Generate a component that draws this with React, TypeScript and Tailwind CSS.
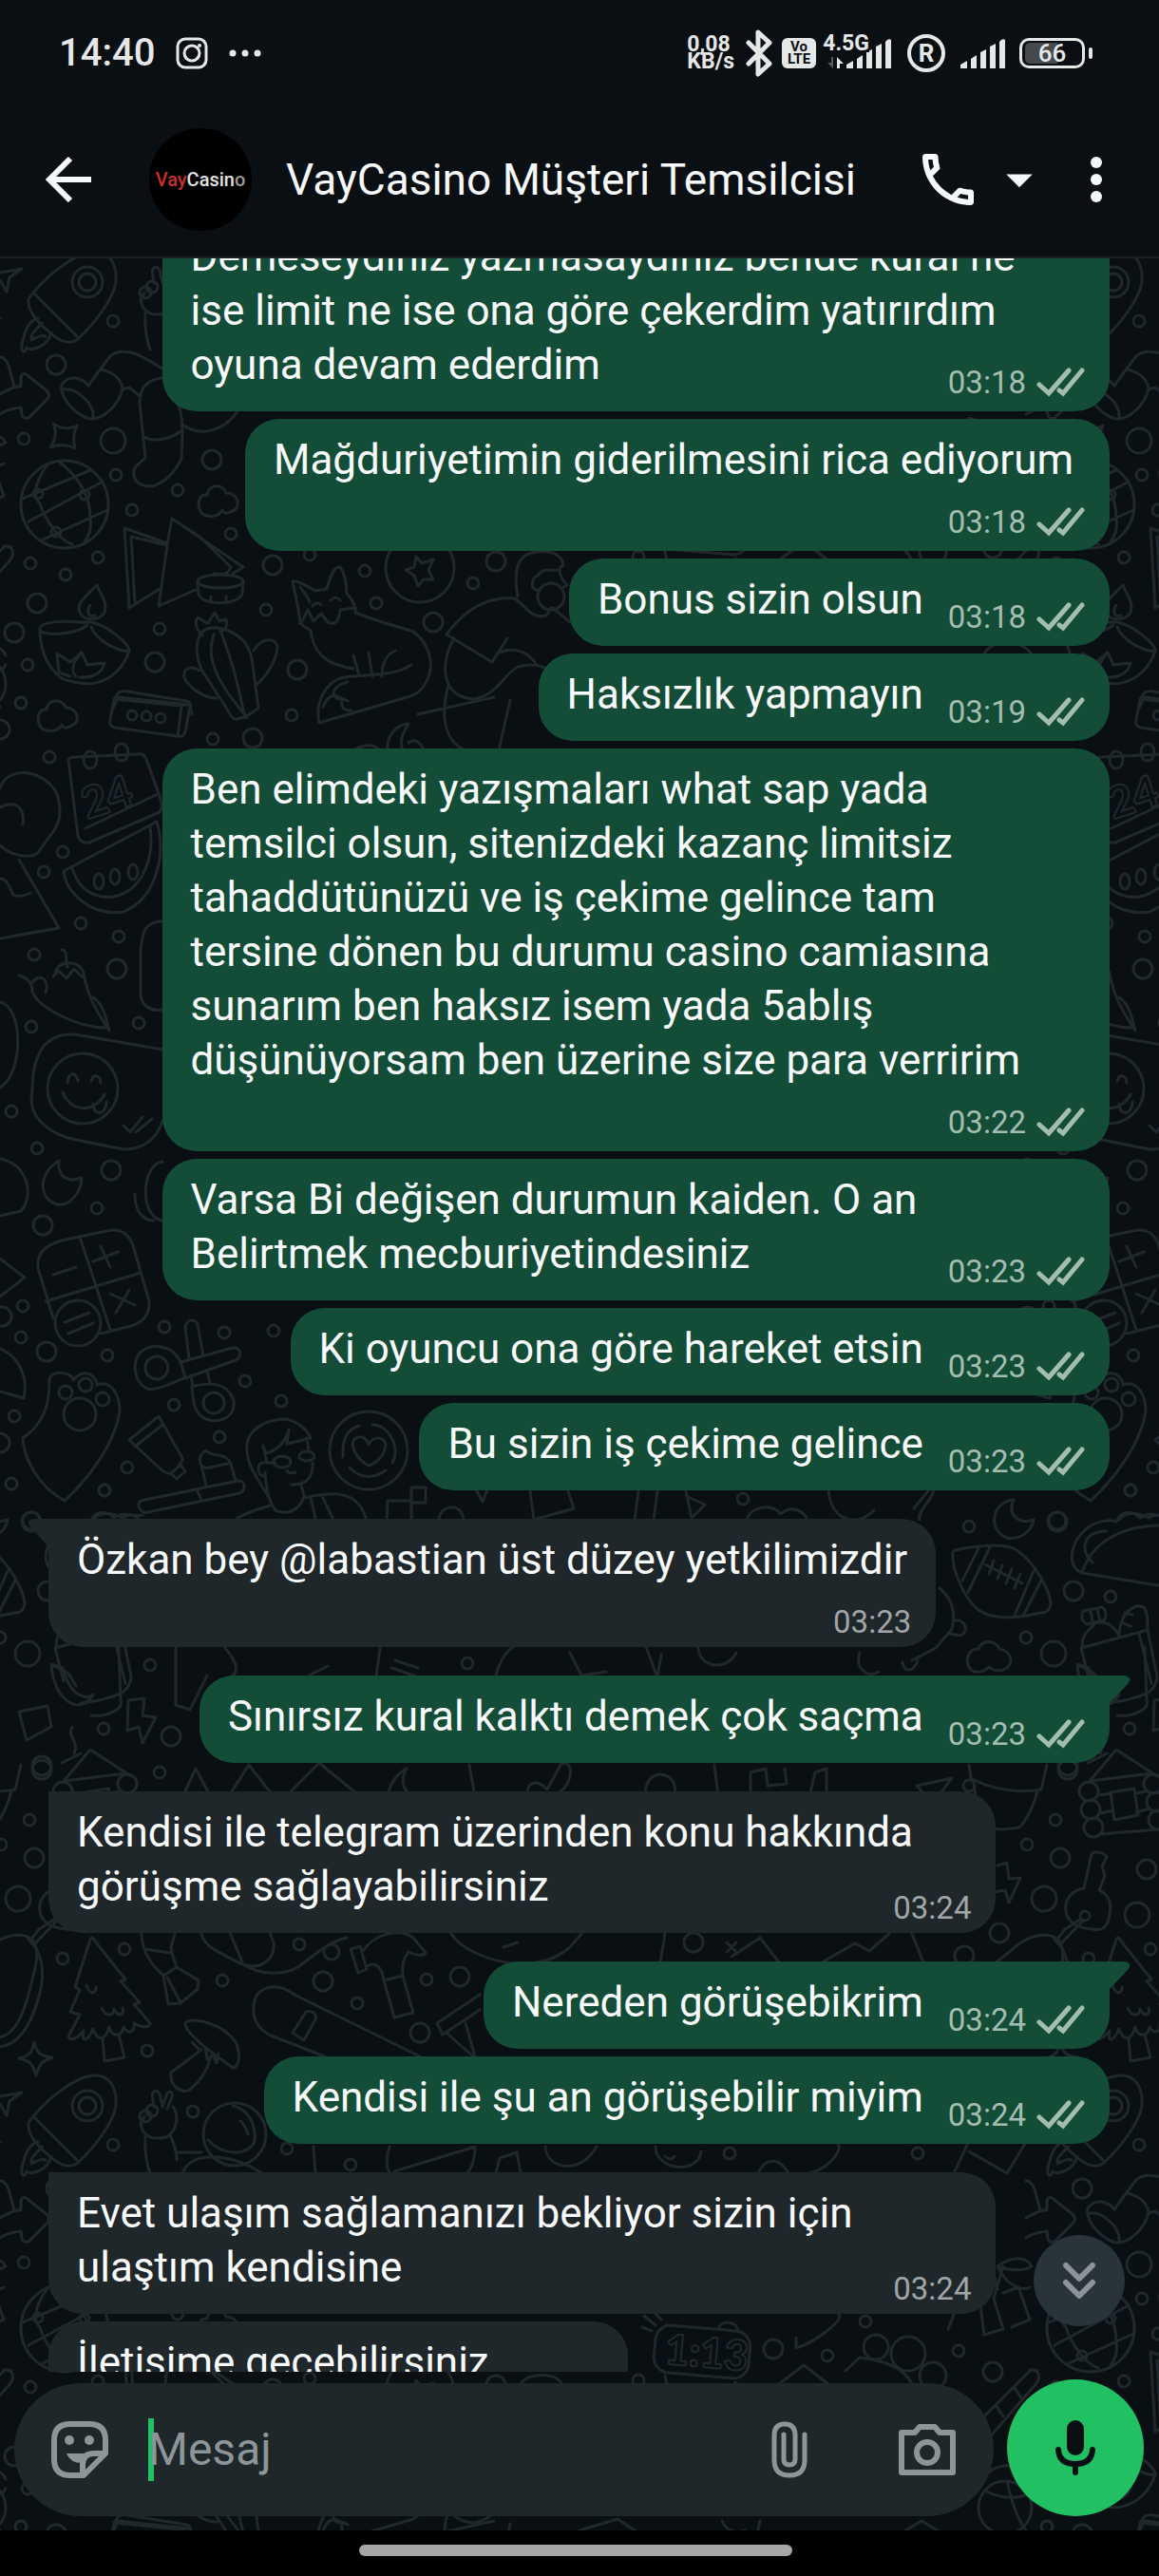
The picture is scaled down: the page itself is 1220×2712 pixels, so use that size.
import { MdArrowDropDown, MdOutlineCall } from 'react-icons/md'

type Message = {
  text: string
  time: string
  out?: boolean
  // first bubble after the sender changes
  first?: boolean
  // where the time sits: beside the text, over the last line, or on a row of its own
  layout?: 'inline' | 'wide' | 'below' | 'wideBelow' | 'halfBelow'
}

const messages: Message[] = [
  {
    text: 'Demeseydiniz yazmasaydınız bende kural ne\nise limit ne ise ona göre çekerdim yatırırdım\noyuna devam ederdim',
    time: '03:18',
    out: true,
    layout: 'wide',
  },
  { text: 'Mağduriyetimin giderilmesini rica ediyorum', time: '03:18', out: true, layout: 'below' },
  { text: 'Bonus sizin olsun', time: '03:18', out: true },
  { text: 'Haksızlık yapmayın', time: '03:19', out: true },
  {
    text: 'Ben elimdeki yazışmaları what sap yada\ntemsilci olsun, sitenizdeki kazanç limitsiz\ntahaddütünüzü ve iş çekime gelince tam\ntersine dönen bu durumu casino camiasına\nsunarım ben haksız isem yada 5ablış\ndüşünüyorsam ben üzerine size para verririm',
    time: '03:22',
    out: true,
    layout: 'wideBelow',
  },
  {
    text: 'Varsa Bi değişen durumun kaiden. O an\nBelirtmek mecburiyetindesiniz',
    time: '03:23',
    out: true,
    layout: 'wide',
  },
  { text: 'Ki oyuncu ona göre hareket etsin', time: '03:23', out: true },
  { text: 'Bu sizin iş çekime gelince', time: '03:23', out: true },
  { text: 'Özkan bey @labastian üst düzey yetkilimizdir', time: '03:23', first: true, layout: 'below' },
  { text: 'Sınırsız kural kalktı demek çok saçma', time: '03:23', out: true, first: true },
  {
    text: 'Kendisi ile telegram üzerinden konu hakkında\ngörüşme sağlayabilirsiniz',
    time: '03:24',
    first: true,
    layout: 'wide',
  },
  { text: 'Nereden görüşebikrim', time: '03:24', out: true, first: true },
  { text: 'Kendisi ile şu an görüşebilir miyim', time: '03:24', out: true },
  {
    text: 'Evet ulaşım sağlamanızı bekliyor sizin için\nulaştım kendisine',
    time: '03:24',
    first: true,
    layout: 'wide',
  },
  { text: 'İletişime geçebilirsiniz', time: '03:24', layout: 'halfBelow' },
]

const dots: [number, number, number][] = [
  [119, 338, 6], [25, 462, 6], [122, 500, 6], [139, 537, 6], [187, 516, 6], [103, 587, 6], [32, 593, 6],
  [69, 605, 6], [243, 562, 6], [280, 642, 6], [168, 662, 6], [29, 700, 6], [22, 740, 6], [326, 584, 6],
  [384, 601, 6], [396, 635, 6], [307, 753, 6], [224, 778, 6], [498, 614, 6], [59, 384, 10], [39, 635, 10],
  [15, 666, 10], [163, 697, 10], [223, 484, 10], [287, 595, 10], [456, 655, 10], [313, 705, 10],
  [266, 777, 10], [522, 591, 10], [119, 464, 13], [0, 768, 10], [52, 797, 6], [66, 897, 6], [46, 918, 6],
  [85, 972, 6], [36, 1005, 6], [125, 986, 6], [123, 1020, 10], [33, 1081, 6], [146, 1077, 6], [12, 1170, 6],
  [39, 1209, 6], [117, 1232, 10], [102, 1272, 6], [45, 1290, 10], [24, 1375, 6], [22, 1408, 6],
  [49, 1423, 10], [113, 1427, 6], [173, 1397, 6], [236, 1403, 6], [288, 1401, 6], [258, 1454, 6],
  [183, 1479, 6], [296, 1475, 6], [231, 1513, 6], [134, 1545, 6], [110, 1569, 6], [15, 1491, 6],
  [12, 1562, 6], [0, 1519, 10], [2, 1386, 10], [33, 1601, 9], [1020, 1607, 6], [1113, 1602, 10],
  [1190, 1569, 6], [1130, 1675, 10], [1169, 1681, 6], [1080, 1724, 6], [1109, 1741, 13], [158, 1753, 6],
  [492, 1751, 6], [180, 1828, 10], [168, 1866, 6], [44, 1859, 10], [1189, 1820, 6], [1124, 1863, 10],
  [1111, 1916, 6], [1081, 1942, 6], [1116, 1956, 10], [1207, 1968, 10], [1099, 1999, 13], [1197, 2016, 13],
  [1052, 2035, 10], [1015, 2059, 10], [66, 2062, 6], [131, 2052, 6], [234, 2085, 6], [155, 2159, 6],
  [315, 2047, 6], [340, 2086, 10], [376, 2109, 6], [449, 2084, 6], [484, 2081, 10], [442, 2140, 10],
  [203, 303, 6], [302, 342, 6], [369, 359, 6], [768, 347, 6], [966, 347, 6], [911, 524, 6], [814, 553, 10],
  [922, 551, 13], [956, 558, 18], [982, 581, 14], [1009, 555, 6], [1045, 577, 10], [871, 560, 6],
  [672, 586, 6], [1102, 740, 6], [782, 1578, 6], [1020, 1880, 6], [730, 2045, 10],
]

const doodles = [
  // star, rocket, flame
  'M0 287L23 283L10 292L7 307L0 295',
  'M35 308C50 290 80 265 100 265C122 266 125 290 120 305C112 325 95 345 83 356C76 363 66 360 60 356C45 345 28 330 30 315ZM35 308L83 356',
  'M40 335C28 338 26 352 23 362C22 372 26 372 28 366C34 370 50 365 54 350M44 340C38 348 32 350 33 358C38 356 42 352 48 354',
  // astronaut waving
  'M152 308L148 315C150 330 160 333 175 330C188 322 188 305 182 298M162 298L160 285C162 280 166 280 168 285L171 298L176 284C180 280 182 283 181 288L176 300',
  'M153 330C152 350 155 360 158 368M179 328C185 340 186 350 186 354M186 346L212 346M192 368C200 345 240 345 276 368M219 333C235 350 260 350 268 335C270 315 260 300 245 297M253 313C258 318 260 322 261 327',
  // arrow, mitten, sock
  'M0 415C8 410 18 406 22 407L22 397C24 392 28 393 30 396L50 412C52 416 52 418 50 420L31 439C28 442 23 440 23 436L22 429C14 430 6 432 0 436M0 376C10 375 12 400 15 406',
  'M65 405C72 394 86 397 93 406L112 380C120 368 130 370 138 371C152 375 165 385 171 388M65 405C62 418 80 438 95 441C110 442 125 425 129 410C128 400 120 392 107 389M67 410C80 408 100 425 98 440',
  'M129 410L136 408L146 416M185 398C155 395 147 408 147 425L153 482L142 492C138 505 145 512 160 512C175 508 185 495 191 483L192 455C192 435 188 425 184 420M151 460C162 466 180 462 190 454M192 447C210 460 235 455 250 433',
  'M56 446C64 452 74 452 81 448C77 456 77 465 79 472C72 468 60 468 53 471C59 462 60 454 56 446Z',
  // globe
  'M50 489C35 510 35 525 42 530C48 550 65 570 76 573M62 486C80 500 95 520 95 545C97 560 92 566 88 572M24 525L95 495M30 549L108 507M43 569L113 537',
  // clouds
  'M212 540C206 530 210 520 218 521C220 508 236 510 238 519C252 519 254 536 244 538C238 542 236 540 234 537C230 545 218 545 212 540Z',
  'M43 766C37 756 41 746 49 747C51 734 67 736 69 745C83 745 85 762 75 764C69 768 67 766 65 763C61 771 49 771 43 766Z',
  'M1022 1758C1014 1748 1020 1735 1030 1736C1034 1724 1050 1728 1052 1736C1066 1738 1068 1754 1056 1758C1050 1760 1044 1758 1041 1755C1036 1760 1028 1762 1022 1758Z',
  // tents and bowl
  'M131 556L176 572L181 546L256 597L245 604M131 556L136 640L168 620M138 565L176 574L167 638L208 620M138 565L142 634M181 546L210 565L243 597C240 605 235 605 225 604',
  'M208 614L209 625C212 638 250 638 255 625L256 612M222 634L222 628M238 634L238 628',
  // lamp
  'M42 662C42 655 65 653 82 655L97 655C110 658 135 675 136 685C130 705 115 715 104 718C95 722 65 718 60 710C50 700 42 685 42 662ZM42 664C50 670 80 668 92 658M96 660C100 672 120 685 136 686',
  'M102 616C90 628 80 635 84 645C88 654 104 654 110 645C114 635 106 626 102 616ZM95 637C90 645 94 650 100 648M60 688L62 708L74 712M60 688L74 697L86 687L92 700L110 698C108 708 98 714 84 713M86 687C74 700 76 708 80 712',
  // remote
  'M120 736L124 730C126 728 132 727 134 728L196 738C200 739 201 741 200 744L195 770C194 775 190 776 187 775L120 766C116 764 115 762 116 758ZM120 736L190 743L199 741M191 744L187 775',
  // cactus
  'M209 672C212 660 228 658 240 664C255 670 264 680 266 700L272 745C265 752 258 755 250 757C246 758 243 755 240 748L212 705C206 690 206 680 209 672ZM225 668C217 690 225 715 260 755M232 664C246 700 250 720 258 756',
  'M210 706C200 700 192 704 194 714C200 725 215 735 228 735M267 685C275 672 288 670 292 680C292 695 280 712 271 720M213 669C204 660 206 652 208 650L216 655L219 656L226 645L231 654L238 652C240 660 236 664 234 664',
  // fox
  'M316 656C315 640 308 615 308 612C312 610 325 618 332 622L344 620C348 605 352 596 358 597C364 605 365 620 365 625C372 632 375 640 374 645C400 655 420 660 435 665C450 675 455 695 453 705C450 722 440 730 432 733L336 761C332 745 338 725 355 715C375 708 410 715 433 700',
  'M316 656C325 665 328 660 328 670C333 690 345 700 372 704M318 654L324 642L330 654L338 646L345 655C355 660 357 650 358 642L374 640M372 690L378 711M388 687L392 712M402 712C402 700 405 690 416 685M366 718C350 722 345 735 360 736C358 748 365 748 370 748M329 638C332 634 336 634 338 637M348 632C352 628 356 629 358 632M316 618C320 624 324 628 326 634',
  'M438 586L444 593L456 589L451 600L456 610L446 610L440 617L436 606L427 600L436 597Z',
  // person
  'M470 668C490 640 515 628 542 630C555 640 560 652 575 648L580 640M470 668L518 697L534 672M478 672C462 700 465 735 500 736C525 730 530 710 545 702C560 698 570 700 578 706M523 688C540 680 555 685 565 700M472 722C464 750 466 780 490 790M537 737L525 790M582 640L600 655',
  'M545 628C540 600 545 585 560 582C575 578 592 582 593 595C585 598 590 608 597 616L590 620M568 622C556 620 560 608 566 606C572 596 582 602 586 600',
  'M372 790C385 782 395 784 400 790M408 790C406 775 418 762 430 762C424 772 420 780 424 790M430 782C438 776 444 784 446 790',
  // calendar
  'M72 800L82 880C84 887 90 888 94 887L168 855C172 850 170 845 168 838L155 802C153 795 150 793 145 794L80 797C74 797 72 798 72 800ZM90 872L166 836',
  'M0 830C10 800 60 815 62 845C68 870 50 880 40 898C30 905 10 900 0 890M0 850C20 840 26 855 24 868',
  // watermelon
  'M67 917L165 865C175 900 165 945 130 960C95 965 70 940 67 917ZM76 914C85 945 115 952 138 936C155 922 162 895 158 870',
  'M20 905L62 977L0 988M0 925C8 925 10 935 14 942C20 945 28 942 32 940',
  // peppers
  'M65 1000C72 1000 68 1010 71 1018M58 1025C60 1010 85 1010 88 1025C92 1050 105 1070 115 1085C112 1075 110 1058 98 1050M20 1027C30 1030 34 1035 34 1044C40 1060 80 1082 112 1082M34 1034C45 1022 52 1035 48 1045M56 1028L62 1022L70 1030L78 1020L86 1028',
  'M171 970C150 970 150 985 148 1000L148 1045C148 1060 160 1065 171 1063M0 1055C25 1060 25 1130 0 1145',
  // winking card
  'M171 1105L85 1090C55 1085 40 1100 35 1130L33 1160C35 1180 55 1195 80 1200L130 1210C150 1210 165 1200 171 1180M71 1140C72 1128 80 1128 82 1138M96 1138C98 1130 106 1132 106 1140M66 1150C75 1172 100 1172 110 1152M98 1162C98 1175 112 1175 112 1160M130 1185L137 1192L150 1176M143 1192L160 1178',
  'M62 1222C40 1235 40 1262 60 1268C75 1270 85 1255 86 1240C72 1245 60 1240 62 1222Z',
  'M171 1223C150 1225 145 1280 171 1285M142 1257C142 1275 150 1285 162 1285M0 1220C30 1225 36 1260 22 1275L0 1280M0 1325L26 1345L0 1365',
  // calculator
  'M40 1335C38 1318 50 1310 65 1306L112 1296C128 1292 138 1300 142 1318L157 1370C158 1385 150 1392 138 1396L106 1404M40 1335L56 1388M84 1302L116 1400M48 1370L148 1340M56 1342L80 1334M98 1328L124 1318M106 1312L116 1334M116 1362L142 1374M136 1358L122 1382',
  'M68 1392L94 1382M72 1404L98 1393',
  'M0 1420C20 1428 30 1450 25 1472L0 1465',
  // paw
  'M52 1454C52 1440 77 1445 77 1453C90 1438 102 1450 102 1458C118 1452 126 1470 126 1485C122 1520 90 1560 68 1580C40 1565 25 1535 24 1514C45 1500 52 1480 52 1454Z',
  // scissors
  'M190 1434C182 1415 160 1415 150 1422C138 1430 140 1455 155 1462C165 1465 190 1452 195 1450ZM202 1460C220 1455 240 1455 246 1475C248 1495 225 1500 213 1492C203 1485 203 1470 202 1460ZM190 1434L245 1419C253 1418 256 1428 248 1432L195 1451M199 1430L195 1398C196 1388 206 1388 208 1395L214 1427M201 1448L203 1459M218 1444L221 1456',
  // toothpaste and brush
  'M136 1516L167 1491L192 1535C192 1540 188 1545 180 1551C175 1552 170 1548 165 1543ZM142 1523L171 1500M180 1551L186 1557L195 1549L189 1541',
  'M148 1580L250 1559C258 1558 260 1568 252 1572L156 1592C148 1594 143 1584 148 1580ZM208 1570L212 1579M217 1564L212 1543C218 1550 230 1540 243 1541L248 1559M212 1543C208 1535 212 1530 217 1527C222 1535 238 1528 243 1541',
  // man with glasses
  'M282 1575C270 1555 258 1540 260 1520C262 1505 280 1494 300 1494C315 1496 325 1508 327 1514L302 1520L304 1505C300 1520 290 1528 280 1530L277 1522L281 1540L290 1540M323 1514L325 1527M329 1540C330 1558 320 1563 307 1563M317 1563L320 1575C315 1592 300 1595 290 1590C282 1580 280 1565 279 1550M279 1540C270 1538 270 1552 277 1554M302 1548C304 1552 308 1551 311 1550M250 1598C265 1590 275 1588 284 1585M320 1577C345 1572 375 1565 385 1598M327 1577L332 1598M340 1577L350 1598',
  // heart plate
  'M361 1534C360 1515 365 1505 378 1501M392 1500C410 1500 422 1525 413 1540M368 1545C380 1558 395 1556 406 1548M388 1543C375 1536 368 1522 373 1515C380 1510 386 1514 388 1521C392 1512 403 1512 406 1520C406 1530 398 1540 388 1543Z',
  'M407 1600L408 1580L433 1580L433 1566L448 1566L448 1582L433 1582L433 1598M462 1600C462 1585 486 1580 488 1600M98 1600C108 1588 124 1596 130 1598C136 1592 144 1596 146 1600',
  'M502 1570L508 1581L513 1568M558 1570L562 1600L604 1588L598 1570M672 1570L668 1600M692 1570L688 1600M722 1570L728 1598L742 1584L724 1576M786 1600C790 1586 812 1582 822 1594C832 1584 846 1590 850 1600M872 1568C874 1600 900 1610 920 1590M968 1600C964 1590 990 1572 980 1566L962 1588',
  // moon, football, taco
  'M1067 1579C1045 1580 1038 1610 1060 1619C1075 1622 1087 1610 1088 1600C1072 1605 1060 1595 1067 1579Z',
  'M1005 1632C1030 1626 1060 1625 1070 1632C1090 1645 1105 1675 1106 1688C1105 1697 1100 1698 1095 1698C1070 1704 1045 1706 1030 1695C1012 1680 1003 1650 1003 1640C1002 1635 1003 1633 1005 1632ZM1030 1630L1013 1664M1042 1629L1019 1676M1088 1654L1067 1703M1096 1664L1077 1701M1037 1647L1076 1667M1046 1643L1041 1657M1055 1648L1050 1662M1065 1652L1059 1667M1074 1657L1068 1672',
  'M1139 1656C1122 1650 1125 1620 1150 1605C1160 1600 1170 1600 1175 1602C1180 1590 1192 1590 1200 1598C1210 1590 1218 1598 1230 1595M1139 1656L1230 1671M1139 1656C1148 1625 1180 1605 1225 1606C1240 1610 1250 1630 1230 1671M1150 1645C1136 1632 1140 1612 1165 1612',
  // bread bag
  'M1140 1735C1136 1720 1150 1715 1152 1709C1165 1705 1172 1712 1178 1722M1138 1735L1208 1716L1218 1765C1216 1785 1200 1785 1185 1790L1165 1793M1138 1735L1147 1770M1199 1720L1212 1772M1178 1722C1178 1700 1195 1685 1205 1693C1210 1705 1207 1712 1208 1716M1184 1698L1192 1700M1180 1708L1190 1712M1140 1696L1160 1692C1166 1696 1164 1704 1162 1706L1144 1710C1138 1706 1138 1700 1140 1696ZM1148 1695L1150 1708M1155 1694L1158 1707',
  'M989 1672C1004 1685 1006 1700 1002 1715L985 1735L960 1748M1004 1706C1018 1704 1020 1720 1010 1722L1000 1720M966 1748C962 1760 952 1762 950 1750M905 1740C900 1755 912 1768 925 1760',
  'M125 1734L127 1790C130 1800 112 1808 96 1806M54 1752C56 1790 84 1808 98 1784C90 1790 74 1786 66 1756ZM54 1752L72 1762L80 1775M185 1734L185 1795L200 1800L218 1764M236 1734C250 1750 255 1764 236 1768M345 1754L325 1764M400 1736L396 1764M416 1748L440 1756M412 1756L436 1764M540 1734C530 1740 524 1755 522 1764M600 1740L612 1764L638 1760M680 1734L692 1766L696 1742M735 1734C735 1756 765 1760 775 1740',
  'M135 1790L152 1788L150 1806L164 1808L150 1835L146 1818L134 1822ZM20 1802L50 1796L54 1818L28 1832ZM76 1818C70 1828 84 1834 78 1846',
  'M192 1892L206 1862L222 1892M240 1892L262 1858L282 1884L292 1892M300 1892L336 1856L380 1892M408 1892C410 1876 420 1866 428 1862C418 1880 430 1890 438 1892M500 1892L494 1858M556 1892C552 1876 566 1872 576 1884L590 1858C604 1850 604 1876 590 1886M680 1890C676 1860 716 1862 710 1890M752 1858L756 1892M790 1892L790 1866L806 1862L808 1880L828 1878L826 1862M852 1892L858 1866L870 1862L870 1892',
  // pot, cabin
  'M1020 1858L1022 1872C1045 1885 1075 1888 1096 1884L1102 1858M1025 1875L1030 1920C1045 1928 1060 1926 1073 1924C1082 1915 1088 1900 1092 1886M965 1880L1002 1872L990 1888L976 1892Z',
  'M1147 1875L1175 1842L1218 1870M1147 1875L1212 1867M1145 1856L1165 1846M1156 1890L1170 1888M1158 1909L1172 1906M1158 1931L1219 1926M1195 1888L1206 1886M1196 1908L1210 1904M1169 1887L1194 1883L1198 1911L1173 1916Z',
  'M1050 1964L1060 1961L1062 1978L1074 1977L1062 2003L1058 1990L1046 1992',
  // key
  'M1141 1988L1149 1952C1152 1948 1162 1950 1165 1955L1160 1965L1163 1975L1157 1990C1168 1995 1170 2005 1168 2015C1166 2030 1160 2033 1150 2031C1130 2030 1120 2020 1122 2005C1124 1995 1130 1990 1141 1988ZM1138 2020L1120 2032L1112 2043L1118 2045L1140 2022',
  // avocado and tree
  'M1048 2066C1065 2055 1075 2038 1100 2037C1120 2038 1122 2055 1115 2080C1108 2110 1100 2140 1080 2145M1110 2042C1130 2060 1125 2090 1120 2105C1110 2140 1095 2155 1076 2155',
  'M98 2041L132 2084L127 2086L147 2108L141 2110L158 2130C158 2135 150 2135 141 2130C142 2140 135 2142 130 2134C128 2145 118 2145 115 2134C110 2150 102 2148 98 2136C92 2150 85 2150 88 2138C78 2150 70 2148 73 2142L84 2121L74 2118L84 2095L79 2092L94 2045C95 2040 97 2039 98 2041ZM108 2145L110 2170L131 2166L125 2142M91 2090C95 2102 101 2098 101 2092M107 2114C112 2125 120 2122 120 2115C125 2125 132 2120 129 2114',
  'M36 2150C39 2162 42 2164 55 2166C44 2170 42 2172 38 2185C34 2172 32 2170 20 2167C32 2164 34 2160 36 2150Z',
  // brush, guitar, hammer
  'M149 2030C148 2050 155 2060 162 2070L172 2080L186 2071C182 2060 180 2055 180 2050L184 2036M172 2080L177 2110L190 2109L208 2094L209 2085L186 2071M152 2052L180 2056M176 2082L190 2108',
  'M212 2036C215 2050 230 2055 255 2068C275 2075 290 2062 288 2045L282 2030M240 2030L256 2068C275 2080 300 2080 315 2070C335 2055 345 2045 365 2040',
  'M369 2052L379 2049L386 2073L377 2077ZM382 2054C395 2035 420 2030 435 2040L448 2056C445 2060 435 2058 430 2055C422 2065 424 2072 424 2080L404 2085C402 2070 395 2065 386 2070M404 2085L415 2124L435 2119L424 2080',
  'M442 2165L310 2100C290 2085 270 2092 267 2110C265 2125 272 2137 285 2143L342 2165M308 2140L322 2118C328 2116 334 2120 332 2126L320 2148ZM460 2130L505 2100M466 2142L505 2116M460 2130L466 2142M470 2140L498 2165M490 2130L500 2165',
  'M475 2036C490 2060 560 2085 600 2050L612 2036M700 2036L695 2066M770 2060L800 2040L820 2066M865 2066L900 2046L915 2054L936 2036M960 2036L972 2066M530 2050L545 2045M765 2045L775 2055M775 2045L765 2055',
  // mushroom
  'M195 2130C200 2122 235 2130 248 2150C255 2165 250 2178 245 2177L215 2155C205 2145 195 2138 195 2130ZM212 2158L180 2182C178 2195 190 2205 200 2200C210 2192 218 2180 222 2165M202 2150L210 2158M216 2155L218 2168L224 2164L228 2172L230 2162',
  'M330 340L332 368M410 340C405 355 408 365 412 370M500 340C500 352 498 362 490 370M415 366L500 340M522 368L526 352L544 346L548 368M574 340C574 362 610 372 628 340M690 340C690 365 735 370 738 345M700 350C704 354 708 354 710 350M798 368C805 352 820 350 830 368M852 368C875 362 890 340 880 335M1005 366L1022 330M1020 345L1060 368L1080 335',
  // clock, banana, bamboo
  'M700 581L702 590L772 596L774 588M757 530C760 522 776 524 777 534M676 530L686 534M678 518L690 528M686 512L696 522',
  'M838 541L838 552C860 545 884 525 884 518L878 510M890 576L905 562C930 566 950 570 960 590M820 590L846 570L872 590',
  'M1020 440L1040 448L1050 490M1036 538L1056 532L1046 500L1056 466M1036 538L1030 492L1046 486M1065 530L1084 522L1072 488L1056 494M1050 466C1065 455 1080 455 1086 466C1076 472 1062 470 1050 466C1060 488 1078 492 1084 488M998 532L1006 512L1046 488',
  'M1035 625L1085 575C1092 574 1096 580 1092 588L1040 648M1048 612L1056 624M1068 594L1076 606M1036 688C1050 668 1080 676 1086 690M1060 692C1064 712 1070 730 1080 744M1036 702C1056 712 1080 712 1086 700',
  'M120 744L124 734L200 742L202 752M340 744C346 730 352 730 366 738M520 734L440 752M610 744L650 732L680 752M760 734C764 744 775 748 784 744M800 734L796 752M940 752L970 734L1000 752',
]

function Wallpaper() {
  return (
    <svg className="pointer-events-none absolute inset-0 h-full w-full" aria-hidden="true">
      <defs>
        <g id="tile" fill="none" stroke="#21282c" strokeWidth="3" strokeLinecap="round" strokeLinejoin="round">
          {doodles.map((d) => (
            <path key={d} d={d} />
          ))}
          {dots.map(([x, y, r]) => (
            <circle key={`${x}-${y}-${r}`} cx={x} cy={y} r={r} />
          ))}
          <circle cx="92" cy="297" r="16" />
          <circle cx="92" cy="297" r="9" />
          <circle cx="153" cy="308" r="6" />
          <circle cx="160" cy="302" r="6" />
          <circle cx="247" cy="327" r="33" />
          <circle cx="68" cy="531" r="46" />
          <circle cx="40" cy="520" r="5" />
          <circle cx="89" cy="521" r="5" />
          <circle cx="59" cy="560" r="5" />
          <ellipse cx="232" cy="612" rx="24" ry="7" />
          <circle cx="139" cy="753" r="5" />
          <circle cx="154" cy="754" r="5" />
          <circle cx="169" cy="756" r="5" />
          <circle cx="442" cy="598" r="36" />
          <circle cx="580" cy="628" r="14" />
          <ellipse cx="95" cy="800" rx="7" ry="9" />
          <ellipse cx="128" cy="792" rx="7" ry="9" />
          <ellipse cx="104" cy="928" rx="5" ry="8" />
          <ellipse cx="121" cy="923" rx="5" ry="8" />
          <ellipse cx="140" cy="918" rx="5" ry="8" />
          <circle cx="87" cy="1146" r="37" />
          <circle cx="82" cy="1393" r="24" />
          <circle cx="69" cy="1466" r="7" />
          <circle cx="90" cy="1458" r="7" />
          <circle cx="108" cy="1473" r="7" />
          <circle cx="84" cy="1489" r="17" />
          <circle cx="165" cy="1440" r="12" />
          <circle cx="225" cy="1477" r="11" />
          <ellipse cx="297" cy="1539" rx="9" ry="6" />
          <ellipse cx="323" cy="1533" rx="8" ry="5" />
          <circle cx="388" cy="1527" r="41" />
          <circle cx="1146" cy="1886" r="10" />
          <circle cx="1148" cy="1905" r="10" />
          <circle cx="1151" cy="1924" r="10" />
          <circle cx="1214" cy="1878" r="10" />
          <circle cx="1217" cy="1897" r="10" />
          <circle cx="1219" cy="1916" r="10" />
          <circle cx="1142" cy="2017" r="5" />
          <circle cx="349" cy="2055" r="8" />
          <circle cx="1058" cy="720" r="28" />
          <rect x="689" y="531" width="100" height="50" rx="16" transform="rotate(5 739 556)" />
          <g strokeWidth="2" fontFamily="Lato, sans-serif" fontWeight="900">
            <text x="86" y="856" fontSize="46" transform="rotate(-18 110 840)">
              24
            </text>
            <text x="700" y="572" fontSize="44" transform="rotate(5 739 556)">
              1:13
            </text>
          </g>
        </g>
      </defs>
      {/* the drawing repeats every 1080 x 1920 */}
      <g transform="translate(0 -272)">
        <use href="#tile" x="-1080" />
        <use href="#tile" />
        <use href="#tile" x="1080" />
        <use href="#tile" x="-1080" y="1920" />
        <use href="#tile" y="1920" />
        <use href="#tile" x="1080" y="1920" />
      </g>
    </svg>
  )
}

function SignalBars() {
  return (
    <svg width="48" height="31" viewBox="0 0 48 31" fill="currentColor" aria-hidden="true">
      <path d="M0 31V27L7 23V31Z" />
      <path d="M11 31V21L17 17V31Z" />
      <path d="M21 31V14L27 11V31Z" />
      <path d="M31 31V8L37 5V31Z" />
      <path d="M41 31V3Q44 -1 47 1V31Z" />
    </svg>
  )
}

function StatusBar() {
  return (
    <div className="flex h-10 items-center justify-between pr-[70px] pl-[62px] text-[#e6e7e7]">
      <div className="flex items-center gap-[22px]">
        <span className="text-[40px] leading-10 font-medium">14:40</span>
        <svg width="34" height="34" viewBox="0 0 34 34" fill="none" stroke="currentColor" strokeWidth="3" aria-hidden="true">
          <rect x="2" y="2" width="30" height="30" rx="8" />
          <circle cx="17" cy="17" r="8" />
          <circle cx="25" cy="9" r="2" fill="currentColor" stroke="none" />
        </svg>
        <svg width="34" height="8" viewBox="0 0 34 8" fill="currentColor" aria-hidden="true">
          <circle cx="4" cy="4" r="3.5" />
          <circle cx="17" cy="4" r="3.5" />
          <circle cx="30" cy="4" r="3.5" />
        </svg>
      </div>
      <div className="flex items-center">
        <div className="flex flex-col text-[23px] leading-[18px] font-bold">
          <span>0,08</span>
          <span>KB/s</span>
        </div>
        <svg className="ml-3" width="28" height="50" viewBox="0 0 28 50" fill="none" stroke="currentColor" strokeWidth="5" strokeLinejoin="round" strokeLinecap="round" aria-hidden="true">
          <path d="M3 14L25 36L13 47V3L25 14L3 36" />
        </svg>
        <div className="ml-2.5 flex h-8 w-9 flex-col items-center justify-center rounded-md bg-[#e6e7e7] text-[15px] leading-[13px] font-bold text-[#0a0f13]">
          <span>Vo</span>
          <span>LTE</span>
        </div>
        <div className="relative ml-8">
          <SignalBars />
          <span className="absolute -top-1 right-6 bg-[#0a0f13] text-[23px] leading-[18px] font-bold">4.5G</span>
          <svg className="absolute bottom-0 -left-5" width="18" height="12" viewBox="0 0 18 12" aria-hidden="true">
            <path d="M6 0V12L0 6H4V0Z" fill="#55595b" />
            <path d="M10 12V0L17 7H13V12Z" fill="currentColor" />
          </svg>
        </div>
        <div className="ml-4 flex h-10 w-10 items-center justify-center rounded-full border-4 border-current text-[26px] leading-6 font-bold">
          R
        </div>
        <div className="ml-4">
          <SignalBars />
        </div>
        <div className="ml-3.5 flex items-center gap-1">
          <div className="relative flex h-8 w-[69px] items-center justify-center rounded-[10px] border-[3px] border-current">
            <div className="absolute inset-y-[2px] left-[3px] w-[34px] rounded-l-[5px] bg-[#46494b]" />
            <span className="relative text-[26px] leading-6 font-medium">66</span>
          </div>
          <div className="h-3 w-1 rounded-full bg-current" />
        </div>
      </div>
    </div>
  )
}

function ChatHeader() {
  return (
    <header className="border-b-2 border-[#1a2024] bg-[#0a0f13] pt-9">
      <StatusBar />
      <div className="mt-8 flex h-[162px] items-center pr-[60px] pl-12 text-[#f7f8fa]">
        <button type="button" aria-label="Geri">
          <svg width="48" height="48" viewBox="0 0 48 48" fill="none" stroke="currentColor" strokeWidth="6" aria-hidden="true">
            <path d="M26 2L4 24L26 46M4 24H48" />
          </svg>
        </button>
        <div className="ml-[61px] flex h-[108px] w-[108px] shrink-0 items-center justify-center rounded-full bg-black text-[20px] leading-6 font-medium">
          <span className="text-[#c9302c]">Vay</span>
          <span className="text-[#e2e2e2]">Casin</span>
          <span className="text-[#9a9a9a]">o</span>
        </div>
        <h1 className="ml-9 flex-1 text-[46px] leading-[60px] whitespace-nowrap">VayCasino Müşteri Temsilcisi</h1>
        <button type="button" aria-label="Ara" className="flex items-center">
          <MdOutlineCall size={72} />
          <MdArrowDropDown size={66} className="ml-1.5" />
        </button>
        <button type="button" aria-label="Menü" className="ml-[42px]">
          <svg width="12" height="48" viewBox="0 0 12 48" fill="currentColor" aria-hidden="true">
            <circle cx="6" cy="6" r="6" />
            <circle cx="6" cy="24" r="6" />
            <circle cx="6" cy="42" r="6" />
          </svg>
        </button>
      </div>
    </header>
  )
}

function Tail({ out }: { out?: boolean }) {
  return out ? (
    <svg className="absolute top-0 left-full text-[#144d37]" width="22" height="30" viewBox="0 0 22 30" fill="currentColor" aria-hidden="true">
      <path d="M-1 0H16Q25 2 19 9L-1 30Z" />
    </svg>
  ) : (
    <svg className="absolute top-0 right-full text-[#1f272a]" width="22" height="30" viewBox="0 0 22 30" fill="currentColor" aria-hidden="true">
      <path d="M23 0H6Q-3 2 3 9L23 30Z" />
    </svg>
  )
}

function Stamp({ time, out }: { time: string; out?: boolean }) {
  return (
    <div className={`flex items-center gap-2.5 self-end justify-self-end ${out ? 'pb-3 text-[#a3bdb1]' : 'pb-2 text-[#a1a5a7]'}`}>
      <time className="text-[33px] leading-9">{time}</time>
      {out && (
        <svg width="52" height="32" viewBox="0 0 52 32" fill="none" stroke="currentColor" strokeWidth="5" strokeLinecap="round" aria-hidden="true">
          <path d="M4 18L14 27L35 3M25 24L29 27L49 3" />
        </svg>
      )}
    </div>
  )
}

const layouts = {
  inline: 'flex gap-[26px]',
  wide: 'grid w-[89.3%] *:[grid-area:1/1]',
  below: 'grid',
  wideBelow: 'grid w-[89.3%]',
  halfBelow: 'grid w-[54.6%]',
}

function Bubble({ text, time, out, first, layout = 'inline' }: Message) {
  const below = layout !== 'inline' && layout !== 'wide'
  const textPadding = below ? (out ? 'pr-3 pb-[19px]' : 'pr-1 pb-[19px]') : 'pb-5'
  return (
    <li
      className={`relative rounded-[36px] pr-[26px] pl-[30px] ${layouts[layout]} ${
        out ? 'self-end bg-[#144d37]' : 'self-start bg-[#1f272a]'
      } ${first ? 'mt-[22px]' : ''} ${first && out ? 'rounded-tr-none' : ''} ${first && !out ? 'rounded-tl-none' : ''}`}
    >
      {first && <Tail out={out} />}
      <p className={`pt-[15px] text-[44px] leading-[57px] whitespace-pre text-[#f7f9fa] ${textPadding}`}>{text}</p>
      <Stamp time={time} out={out} />
    </li>
  )
}

function Composer() {
  return (
    <form className="relative flex items-end gap-3.5 pt-2 pr-4 pb-[15px] pl-[15px]">
      <div className="flex h-[140px] flex-1 items-center rounded-full bg-[#1f272a] pr-10 pl-[39px] text-[#8d9598]">
        <button type="button" aria-label="Çıkartmalar">
          <svg width="60" height="60" viewBox="0 0 60 60" fill="none" stroke="currentColor" strokeWidth="6" aria-hidden="true">
            <path d="M20 3H40Q57 3 57 20V34L34 57H20Q3 57 3 40V20Q3 3 20 3Z" strokeLinejoin="round" />
            <path d="M33 57V46Q33 34 45 34H57" />
            <circle cx="19" cy="20" r="5" fill="currentColor" stroke="none" />
            <circle cx="40" cy="20" r="5" fill="currentColor" stroke="none" />
            <path d="M16 34H38Q33 38 32 44Q20 44 16 34Z" fill="currentColor" stroke="none" />
          </svg>
        </button>
        <span className="ml-[42px] h-[66px] w-1.5 bg-[#21c063]" />
        <input
          type="text"
          aria-label="Mesaj"
          placeholder="Mesaj"
          className="relative -ml-1.5 min-w-0 flex-1 bg-transparent text-[48px] leading-[66px] outline-none placeholder:text-[#8d9598]"
        />
        <button type="button" aria-label="Ekle">
          <svg width="38" height="60" viewBox="0 0 38 60" fill="none" stroke="currentColor" strokeWidth="5" strokeLinecap="round" aria-hidden="true">
            <path d="M35 14V41Q35 57 19 57Q3 57 3 41V15Q3 3 14 3Q25 3 25 15V40Q25 46 19 46Q13 46 13 40V14" />
          </svg>
        </button>
        <button type="button" aria-label="Kamera" className="ml-24">
          <svg width="60" height="54" viewBox="0 0 60 54" fill="none" stroke="currentColor" strokeWidth="6" strokeLinejoin="round" aria-hidden="true">
            <path d="M3 9H17L22 3H38L43 9H57V51H3Z" />
            <circle cx="30" cy="30" r="11" />
          </svg>
        </button>
      </div>
      <button type="button" aria-label="Sesli mesaj" className="flex h-36 w-36 items-center justify-center rounded-full bg-[#21c063] text-[#0a0f13]">
        <svg width="42" height="58" viewBox="0 0 42 58" fill="none" stroke="currentColor" strokeWidth="6" strokeLinecap="round" aria-hidden="true">
          <rect x="12" y="0" width="18" height="37" rx="9" fill="currentColor" stroke="none" />
          <path d="M3 31Q4 46 21 46Q38 46 39 31M21 47V55" />
        </svg>
      </button>
    </form>
  )
}

export default function App() {
  return (
    <div className="flex h-screen flex-col bg-[#0a0f13] font-['Roboto','Noto_Sans',sans-serif]">
      <ChatHeader />
      <main className="relative flex min-h-0 flex-1 flex-col">
        <Wallpaper />
        <div className="relative min-h-0 flex-1 overflow-hidden">
          <ul className="-mt-[45px] flex flex-col gap-2 pr-[52px] pl-[51px]">
            {messages.map((message) => (
              <Bubble key={message.text} {...message} />
            ))}
          </ul>
          <button
            type="button"
            aria-label="En alta in"
            className="absolute right-9 bottom-12 flex h-24 w-24 items-center justify-center rounded-full bg-[#28333a] text-[#8d9598]"
          >
            <svg width="36" height="40" viewBox="0 0 36 40" fill="none" stroke="currentColor" strokeWidth="6" strokeLinecap="round" strokeLinejoin="round" aria-hidden="true">
              <path d="M4 4L18 18L32 4M4 22L18 36L32 22" />
            </svg>
          </button>
        </div>
        <Composer />
      </main>
      <div className="flex h-12 items-center justify-center bg-black pr-2 pb-1.5">
        <div className="h-3 w-[37.6%] rounded-full bg-[#a6a6a6]" />
      </div>
    </div>
  )
}
